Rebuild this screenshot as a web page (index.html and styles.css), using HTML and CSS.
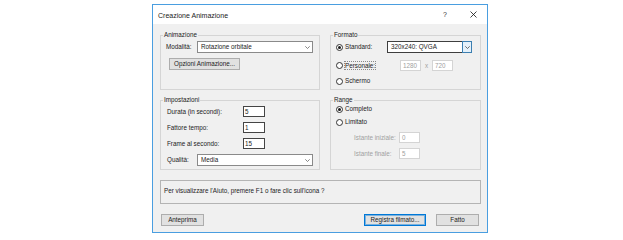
FILE: index.html
```html
<!DOCTYPE html>
<html lang="it">
<head>
<meta charset="utf-8">
<title>Creazione Animazione</title>
<link rel="stylesheet" href="styles.css">
</head>
<body>
<div class="dialog">
  <div class="titlebar">
    <span class="title">Creazione Animazione</span>
    <span class="tb-btn tb-help">?</span>
    <span class="tb-btn tb-close"><svg width="7" height="7" viewBox="0 0 7 7"><path d="M0.5 0.5L6.5 6.5M6.5 0.5L0.5 6.5" stroke="#111" stroke-width="0.8" fill="none"/></svg></span>
  </div>
  <div class="client">
    <div class="row row-top">
      <div class="group g-left">
        <div class="legend">Animazione</div>
        <div class="field f-mod">
          <span class="lbl w-mod">Modalità:</span>
          <div class="combo w-combo"><span class="val">Rotazione orbitale</span><span class="arrow"><svg width="5" height="3" viewBox="0 0 5 3"><path d="M0.3 0.3L2.5 2.5L4.7 0.3" stroke="#555" stroke-width="0.7" fill="none"/></svg></span></div>
        </div>
        <div class="btn b-opz">Opzioni Animazione...</div>
      </div>
      <div class="group g-right">
        <div class="legend">Formato</div>
        <div class="field f-std">
          <span class="radio on"></span>
          <span class="rlbl w-std">Standard:</span>
          <div class="combo dark w-stdc"><span class="val">320x240: QVGA</span><span class="arrow dd"><svg width="5" height="3" viewBox="0 0 5 3"><path d="M0.3 0.3L2.5 2.5L4.7 0.3" stroke="#333" stroke-width="0.7" fill="none"/></svg></span></div>
        </div>
        <div class="field f-pers">
          <span class="radio"></span>
          <span class="rlbl w-pers"><span class="focus-rect">Personale:</span></span>
          <div class="edit dis w21">1280</div>
          <span class="times">x</span>
          <div class="edit dis w21">720</div>
        </div>
        <div class="field f-sch">
          <span class="radio"></span>
          <span class="rlbl">Schermo</span>
        </div>
      </div>
    </div>
    <div class="row row-mid">
      <div class="group g-left">
        <div class="legend">Impostazioni</div>
        <div class="field f-set first">
          <span class="lbl w-set">Durata (in secondi):</span>
          <div class="edit w22">5</div>
        </div>
        <div class="field f-set">
          <span class="lbl w-set">Fattore tempo:</span>
          <div class="edit w22">1</div>
        </div>
        <div class="field f-set">
          <span class="lbl w-set">Frame al secondo:</span>
          <div class="edit w22">15</div>
        </div>
        <div class="field f-q">
          <span class="lbl w-q">Qualità:</span>
          <div class="combo w-combo"><span class="val">Media</span><span class="arrow"><svg width="5" height="3" viewBox="0 0 5 3"><path d="M0.3 0.3L2.5 2.5L4.7 0.3" stroke="#555" stroke-width="0.7" fill="none"/></svg></span></div>
        </div>
      </div>
      <div class="group g-right">
        <div class="legend">Range</div>
        <div class="field f-r1">
          <span class="radio on"></span>
          <span class="rlbl">Completo</span>
        </div>
        <div class="field f-r2">
          <span class="radio"></span>
          <span class="rlbl">Limitato</span>
        </div>
        <div class="field f-ist first">
          <span class="lbl dis w-ist">Istante iniziale:</span>
          <div class="edit dis w21">0</div>
        </div>
        <div class="field f-ist">
          <span class="lbl dis w-ist">Istante finale:</span>
          <div class="edit dis w21">5</div>
        </div>
      </div>
    </div>
    <div class="helpbox">Per visualizzare l'Aiuto, premere F1 o fare clic sull'icona ?</div>
    <div class="buttons">
      <div class="btn b-prev">Anteprima</div>
      <div class="spacer"></div>
      <div class="btn b-rec">Registra filmato...</div>
      <div class="btn b-fatto">Fatto</div>
    </div>
  </div>
</div>
</body>
</html>
```
FILE: styles.css
```css
* { box-sizing: border-box; }
html, body { background: #ffffff; }
body {
  margin: 0;
  padding: 4px 0 0 152px;
  font-family: "Liberation Sans", Arial, sans-serif;
  font-size: 6.3px;
  color: #222;
}
.dialog {
  width: 336px;
  height: 229px;
  border: 1px solid #4a9ee0;
  background: #f0f0f0;
  display: flex;
  flex-direction: column;
}
.titlebar {
  flex: none;
  height: 19px;
  background: #fff;
  display: flex;
  align-items: center;
  padding-left: 5px;
}
.title { flex: 1; font-size: 7px; padding-top: 1px; }
.tb-btn {
  width: 28px;
  height: 100%;
  display: flex;
  align-items: center;
  justify-content: center;
}
.tb-help { font-size: 7px; color: #333; }
.client {
  flex: 1;
  padding: 11px 6px 0 7px;
  display: flex;
  flex-direction: column;
  gap: 10px;
}
.row { display: flex; gap: 10px; }
.group { border: 1px solid #d5d5d5; }
.g-left { width: 160px; }
.g-right { width: 151px; }
.row-top .group { height: 55px; }
.row-mid .group { height: 70px; }
.legend {
  margin: -5px 0 0 2px;
  padding: 0 1px;
  line-height: 8px;
  background: #f0f0f0;
  width: max-content;
}
.field { display: flex; align-items: center; }
.lbl, .rlbl { flex: none; line-height: 8px; white-space: nowrap; }
.dis { color: #a0a0a0; }
.combo {
  height: 12px;
  border: 1px solid #8a8a8a;
  background: #fff;
  display: flex;
  align-items: center;
  padding-left: 3px;
  flex: none;
}
.combo.dark { border-color: #3f3f3f; }
.combo .val { flex: 1; line-height: 8px; }
.combo .arrow {
  width: 9px;
  align-self: stretch;
  display: flex;
  align-items: center;
  justify-content: center;
}
.combo .arrow.dd {
  margin: -1px -1px -1px 0;
  width: 10px;
  border: 1px solid #3c7fb1;
  background: #e5f1fb;
}
.edit {
  height: 11px;
  border: 1px solid #444;
  background: #fff;
  padding-left: 1px;
  display: flex;
  align-items: center;
  flex: none;
  line-height: 8px;
}
.edit.dis { border-color: #d4d4d4; color: #a0a0a0; padding-left: 2px; }
.w21 { width: 21px; }
.w22 { width: 22px; }
.radio {
  flex: none;
  width: 7px;
  height: 7px;
  border: 1px solid #333;
  border-radius: 50%;
  background: #fff;
  display: flex;
  align-items: center;
  justify-content: center;
  margin-right: 2px;
}
.radio.on::after {
  content: "";
  width: 3px;
  height: 3px;
  border-radius: 50%;
  background: #1a1a1a;
}
.btn {
  height: 12px;
  border: 1px solid #adadad;
  background: #e1e1e1;
  display: flex;
  align-items: center;
  justify-content: center;
  flex: none;
  line-height: 8px;
}
/* Animazione */
.f-mod { margin: 2px 0 0 5px; }
.w-mod { width: 31px; }
.w-combo { width: 116px; }
.b-opz { margin: 5px 0 0 8px; width: 71px; }
/* Formato */
.f-std { margin: 2px 0 0 5px; }
.w-std { width: 42px; }
.w-stdc { width: 85px; }
.f-pers { margin: 7px 0 0 5px; }
.w-pers { width: 55px; }
.focus-rect { outline: 1px dotted #888; outline-offset: 0; }
.times { width: 11px; text-align: center; color: #a0a0a0; line-height: 8px; }
.f-sch { margin: 6px 0 0 5px; }
/* Impostazioni */
.f-set { margin: 5px 0 0 6px; }
.f-set.first { margin-top: 2px; }
.w-set { width: 76px; }
.f-q { margin: 5px 0 0 6px; }
.w-q { width: 30px; }
/* Range */
.f-r1 { margin: 1px 0 0 5px; }
.f-r2 { margin: 5px 0 0 5px; }
.f-ist { margin: 5px 0 0 23px; }
.f-ist.first { margin-top: 6px; }
.w-ist { width: 45px; }
/* help */
.helpbox {
  flex: none;
  height: 24px;
  border: 1px solid #b4b4b4;
  padding: 6px 0 0 3px;
  line-height: 8px;
}
.buttons {
  flex: none;
  display: flex;
  gap: 10px;
  height: 12px;
  padding: 0 2px 0 1px;
}
.spacer { flex: 1; }
.b-prev { width: 43px; }
.b-rec { width: 62px; border-color: #0078d7; box-shadow: inset 0 0 0 1px rgba(0, 120, 215, 0.45); }
.b-fatto { width: 43px; }
```
